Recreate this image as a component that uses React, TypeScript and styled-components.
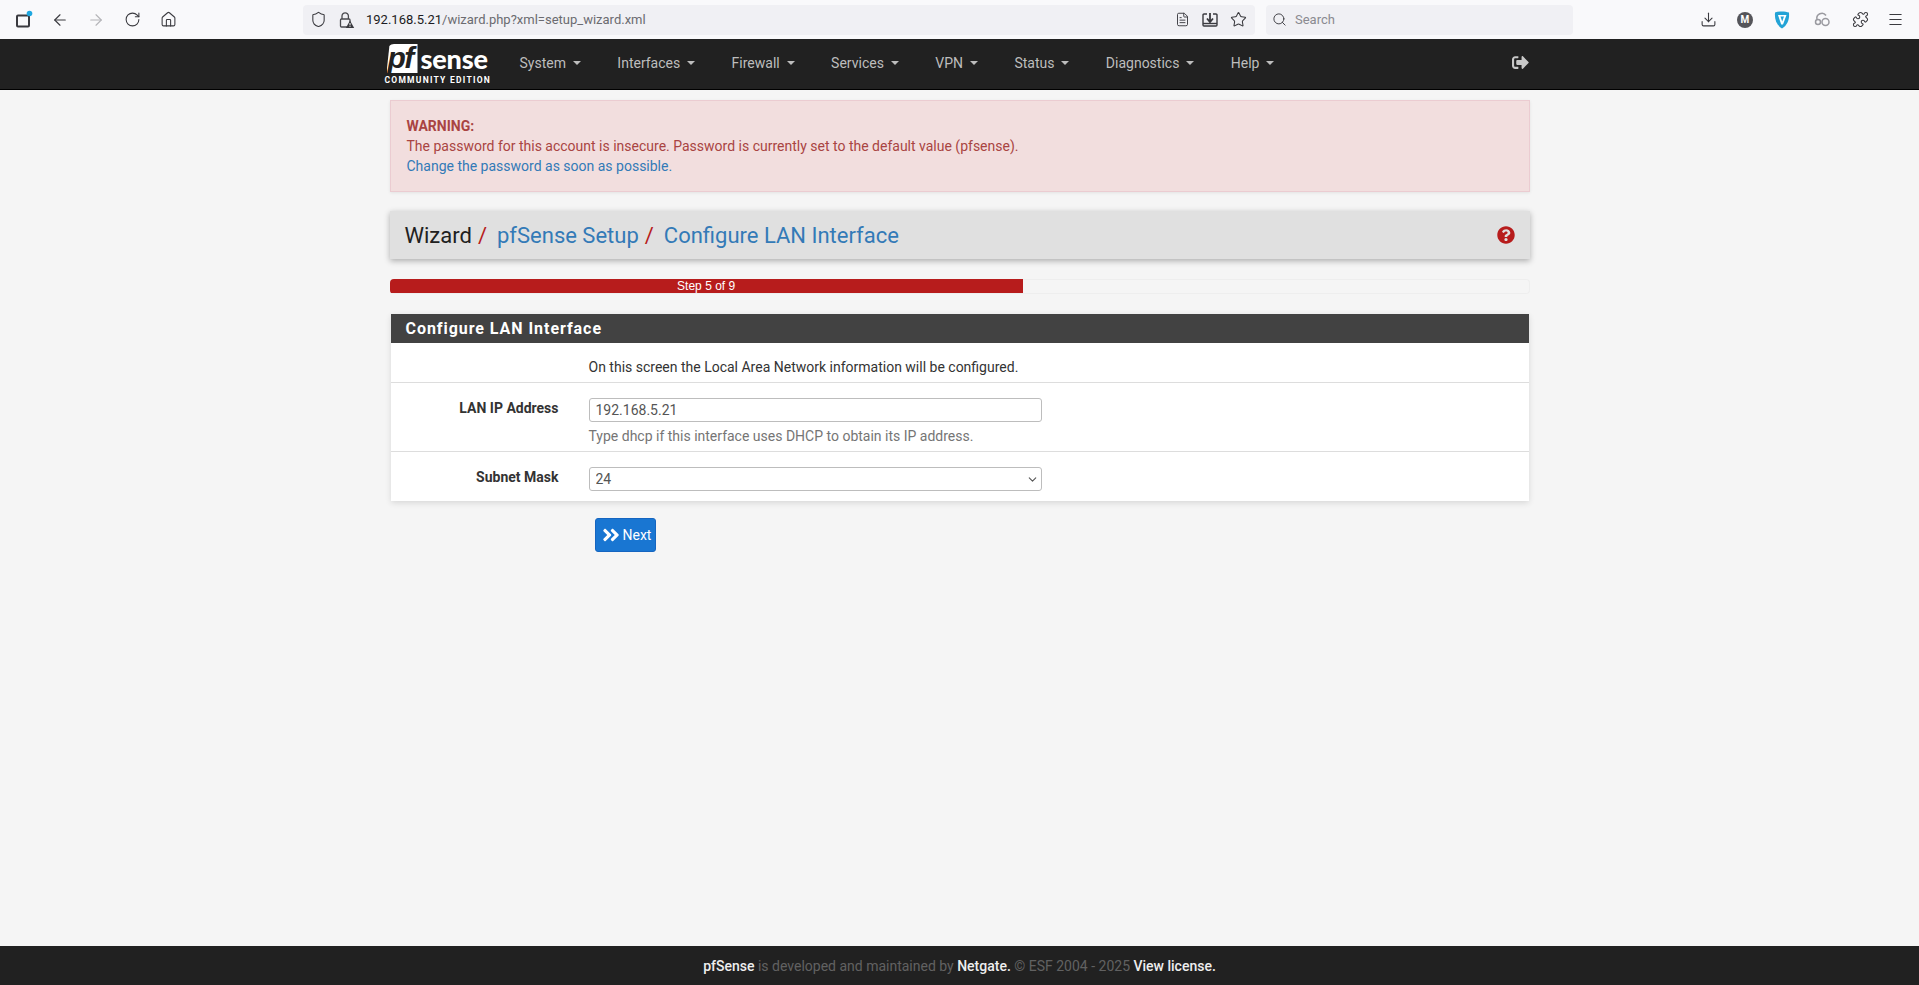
import React from "react";
import styled, { createGlobalStyle } from "styled-components";
import {
  ArrowLeft,
  ArrowRight,
  RotateCw,
  Home,
  Shield,
  FileText,
  Star,
  Search,
  Download,
  Puzzle,
  Menu,
  ChevronDown,
} from "lucide-react";
import { FaSignOutAlt, FaQuestionCircle, FaAngleDoubleRight } from "react-icons/fa";

const NAV_ITEMS = [
  "System",
  "Interfaces",
  "Firewall",
  "Services",
  "VPN",
  "Status",
  "Diagnostics",
  "Help",
];

const STEP = 5;
const TOTAL_STEPS = 9;

const App: React.FC = () => {
  return (
    <>
      <GlobalStyle />
      <Page>
        <BrowserBar>
          <ToolButton $left={12}>
            <TabsIcon />
          </ToolButton>
          <ToolButton $left={12}>
            <ArrowLeft size={18} strokeWidth={1.5} />
          </ToolButton>
          <ToolButton $left={12} $dim>
            <ArrowRight size={18} strokeWidth={1.5} />
          </ToolButton>
          <ToolButton $left={12}>
            <RotateCw size={17} strokeWidth={1.5} />
          </ToolButton>
          <ToolButton $left={12}>
            <Home size={17} strokeWidth={1.5} />
          </ToolButton>
          <UrlBar>
            <Shield size={17} strokeWidth={1.5} />
            <LockIcon />
            <UrlText>
              <b>192.168.5.21</b>/wizard.php?xml=setup_wizard.xml
            </UrlText>
            <UrlActions>
              <FileText size={15} strokeWidth={1.5} />
              <SaveIcon />
              <Star size={17} strokeWidth={1.5} />
            </UrlActions>
          </UrlBar>
          <SearchBar>
            <Search size={15} strokeWidth={1.5} />
            <span>Search</span>
          </SearchBar>
          <ExtensionTools>
            <Download size={17} strokeWidth={1.5} />
            <AccountBadge>M</AccountBadge>
            <VpnIcon />
            <LinkIcon />
            <Puzzle size={17} strokeWidth={1.5} />
            <Menu size={17} strokeWidth={1.5} />
          </ExtensionTools>
        </BrowserBar>

        <NavBar>
          <Container>
            <NavRow>
              <Logo>
                <LogoTop>
                  <LogoPf>pf</LogoPf>
                  <LogoSense>sense</LogoSense>
                </LogoTop>
                <LogoEdition>COMMUNITY EDITION</LogoEdition>
              </Logo>
              <NavList>
                {NAV_ITEMS.map((item) => (
                  <NavItem key={item}>
                    {item}
                    <Caret />
                  </NavItem>
                ))}
              </NavList>
              <SignOut>
                <FaSignOutAlt size={17} />
              </SignOut>
            </NavRow>
          </Container>
        </NavBar>

        <Main>
          <Container>
            <Alert>
              <strong>WARNING:</strong>
              <br />
              The password for this account is insecure. Password is currently set to the default
              value (pfsense).
              <br />
              <a>Change the password as soon as possible.</a>
            </Alert>

            <TitleBar>
              <Crumbs>
                <span>Wizard</span>
                <Slash>/</Slash>
                <a>pfSense Setup</a>
                <Slash>/</Slash>
                <a>Configure LAN Interface</a>
              </Crumbs>
              <HelpLink>
                <FaQuestionCircle size={18} />
              </HelpLink>
            </TitleBar>

            <Progress>
              <ProgressFill style={{ width: `${(STEP / TOTAL_STEPS) * 100}%` }}>
                Step {STEP} of {TOTAL_STEPS}
              </ProgressFill>
            </Progress>

            <Panel>
              <PanelHeading>Configure LAN Interface</PanelHeading>
              <FormRow $height={40}>
                <RowLabel />
                <RowField>
                  <Intro>On this screen the Local Area Network information will be configured.</Intro>
                </RowField>
              </FormRow>
              <FormRow $height={69}>
                <RowLabel>LAN IP Address</RowLabel>
                <RowField>
                  <TextInput defaultValue="192.168.5.21" />
                  <HelpText>Type dhcp if this interface uses DHCP to obtain its IP address.</HelpText>
                </RowField>
              </FormRow>
              <FormRow $height={49}>
                <RowLabel>Subnet Mask</RowLabel>
                <RowField>
                  <SelectWrap>
                    <SelectBox defaultValue="24">
                      <option value="24">24</option>
                    </SelectBox>
                    <SelectArrow>
                      <ChevronDown size={13} strokeWidth={2} />
                    </SelectArrow>
                  </SelectWrap>
                </RowField>
              </FormRow>
            </Panel>

            <NextButton>
              <FaAngleDoubleRight size={20} />
              Next
            </NextButton>
          </Container>
        </Main>

        <Footer>
          <b>pfSense</b> is developed and maintained by <b>Netgate.</b> © ESF 2004 - 2025{" "}
          <b>View license.</b>
        </Footer>
      </Page>
    </>
  );
};

export default App;

const TabsIcon = () => (
  <svg width="20" height="20" viewBox="0 0 20 20" fill="none">
    <rect x="3" y="5.5" width="12" height="11" rx="1" stroke="#3a3a3f" strokeWidth="2" />
    <circle cx="15.5" cy="3.5" r="2.8" fill="#1ea7e0" />
  </svg>
);

const LockIcon = () => (
  <svg width="18" height="18" viewBox="0 0 18 18" fill="none">
    <path d="M5 8V5a3.2 3.2 0 0 1 6.4 0v3" stroke="#4a4a4f" strokeWidth="1.3" />
    <rect x="3.5" y="8" width="9.5" height="8" rx="1" stroke="#4a4a4f" strokeWidth="1.3" />
    <path d="M13 9.5l4.2 7.5H8.8z" fill="#3a3a3f" />
    <path d="M13 12v2.4M13 15.2v.8" stroke="#fff" strokeWidth="1" />
  </svg>
);

const SaveIcon = () => (
  <svg width="18" height="18" viewBox="0 0 18 18" fill="none" stroke="#3a3a3f" strokeWidth="1.4">
    <path d="M6 3H3a1 1 0 0 0-1 1v10a1 1 0 0 0 1 1h12a1 1 0 0 0 1-1V4a1 1 0 0 0-1-1h-3" />
    <path d="M9 2v8M6 7.5L9 11l3-3.5" strokeWidth="1.8" />
    <path d="M2 12.5h14" />
  </svg>
);

const VpnIcon = () => (
  <svg width="18" height="20" viewBox="0 0 18 20">
    <path d="M2 2.5c4-1.5 10-1.5 14 0 .6 7-1.5 12.500-7 16-5.500-3.500-7.600-9-7-16z" fill="#23a3d6" />
    <path d="M5 5h8.500l-3.500 9.500H8.200z" fill="#fff" />
    <path d="M7.500 6.500h3.500l-1.800 5z" fill="#23a3d6" />
  </svg>
);

const LinkIcon = () => (
  <svg width="19" height="18" viewBox="0 0 19 18" fill="none" stroke="#9a9aa0" strokeWidth="1.5">
    <circle cx="12.500" cy="11" r="3.500" />
    <circle cx="5" cy="11" r="2.500" />
    <path d="M4 8.500a5 5 0 0 1 9-4" />
  </svg>
);

const GlobalStyle = createGlobalStyle`
  html, body {
    margin: 0;
    padding: 0;
    height: 100%;
    background: #f5f5f5;
  }
  body {
    font-family: Roboto, "Liberation Sans", sans-serif;
    font-size: 14px;
    line-height: 20px;
    color: #333;
  }
  #root {
    height: 100%;
  }
  * {
    box-sizing: border-box;
  }
`;

const Page = styled.div`
  display: flex;
  flex-direction: column;
  height: 985px;
  overflow: hidden;
`;

const BrowserBar = styled.div`
  display: flex;
  align-items: center;
  flex: none;
  height: 39px;
  background: #f9f9fb;
  color: #3a3a3f;
`;

const ToolButton = styled.div<{ $left: number; $dim?: boolean }>`
  display: flex;
  align-items: center;
  justify-content: center;
  width: 24px;
  height: 24px;
  margin-left: ${(p) => p.$left}px;
  color: ${(p) => (p.$dim ? "#b4b4b8" : "#3a3a3f")};
`;

const UrlBar = styled.div`
  display: flex;
  align-items: center;
  width: 952px;
  height: 30px;
  margin-left: 123px;
  padding: 0 8px 0 7px;
  gap: 10px;
  background: #f0f0f4;
  border-radius: 4px;
  font-family: Roboto, sans-serif;
`;

const UrlText = styled.span`
  margin-left: 1px;
  font-size: 13px;
  color: #6b6b70;
  b {
    font-weight: 400;
    color: #1c1b22;
  }
`;

const UrlActions = styled.div`
  display: flex;
  align-items: center;
  gap: 11px;
  margin-left: auto;
`;

const SearchBar = styled.div`
  display: flex;
  align-items: center;
  width: 307px;
  height: 30px;
  margin-left: 11px;
  padding-left: 6px;
  gap: 8px;
  background: #f0f0f4;
  border-radius: 4px;
  font-family: Roboto, sans-serif;
  font-size: 13px;
  color: #8a8a90;
  svg {
    color: #3a3a3f;
  }
`;

const ExtensionTools = styled.div`
  display: flex;
  align-items: center;
  gap: 20px;
  margin-left: 127px;
  svg:nth-child(4) {
    margin-left: 2px;
  }
  svg:last-child {
    margin-left: -2px;
  }
`;

const AccountBadge = styled.div`
  display: flex;
  align-items: center;
  justify-content: center;
  width: 16px;
  height: 16px;
  border-radius: 50%;
  background: #55555a;
  color: #fff;
  font-size: 10px;
  font-weight: 700;
`;

const Container = styled.div`
  width: 1140px;
  margin: 0 auto;
`;

const NavBar = styled.nav`
  flex: none;
  height: 51px;
  background: #212121;
  border-bottom: 1px solid #000;
`;

const NavRow = styled.div`
  display: flex;
  align-items: center;
  height: 50px;
`;

const Logo = styled.div`
  display: flex;
  flex-direction: column;
  width: 106px;
  margin-left: -5px;
  color: #fff;
`;

const LogoTop = styled.div`
  display: flex;
  align-items: center;
  height: 30px;
  padding-left: 2px;
`;

const LogoPf = styled.span`
  display: block;
  flex: none;
  width: 31px;
  height: 29px;
  background: #fff;
  border-radius: 7px 0 0 0;
  clip-path: polygon(0 100%, 10% 0, 100% 0, 100% 100%);
  color: #212121;
  font-family: "Liberation Sans", sans-serif;
  font-size: 30px;
  font-style: italic;
  font-weight: 700;
  line-height: 27px;
  letter-spacing: -1.5px;
  text-indent: 1px;
`;

const LogoSense = styled.span`
  margin-left: 3px;
  font-family: Lato, sans-serif;
  font-size: 27px;
  font-weight: 900;
  line-height: 30px;
  letter-spacing: -0.2px;
`;

const LogoEdition = styled.div`
  margin-top: 1px;
  font-family: Roboto, sans-serif;
  font-size: 8.5px;
  font-weight: 700;
  line-height: 10px;
  letter-spacing: 1.25px;
  white-space: nowrap;
`;

const NavList = styled.div`
  display: flex;
  align-items: center;
  gap: 36.4px;
  margin-bottom: 2px;
  margin-left: 29px;
`;

const NavItem = styled.div`
  display: flex;
  align-items: center;
  color: #bdbdbd;
  font-size: 14px;
  white-space: nowrap;
`;

const Caret = styled.span`
  width: 0;
  height: 0;
  margin-left: 7px;
  border-top: 4px solid #bdbdbd;
  border-left: 4px solid transparent;
  border-right: 4px solid transparent;
`;

const SignOut = styled.div`
  display: flex;
  margin: 0 0 4px auto;
  padding-right: 1px;
  color: #c8c8c8;
`;

const Main = styled.main`
  flex: 1;
  padding-top: 10px;
`;

const Alert = styled.div`
  height: 92px;
  padding: 15px 15px 15px 16px;
  background: #f2dede;
  border: 1px solid #ebccd1;
  box-shadow: 0 1px 3px rgba(0, 0, 0, 0.08);
  color: #a94442;
  font-size: 14px;
  line-height: 20px;
  a {
    color: #337ab7;
  }
`;

const TitleBar = styled.div`
  display: flex;
  align-items: center;
  justify-content: space-between;
  height: 48px;
  margin-top: 19px;
  padding: 0 15px 0 15px;
  background: #e0e0e0;
  box-shadow: 0 2px 6px rgba(0, 0, 0, 0.3);
`;

const Crumbs = styled.h1`
  display: flex;
  margin: 0;
  padding-top: 2px;
  font-size: 22px;
  font-weight: 400;
  line-height: 28px;
  color: #212121;
  a {
    color: #337ab7;
  }
`;

const Slash = styled.span`
  margin: 0 10px 0 6px;
  color: #b71c1c;
`;

const HelpLink = styled.div`
  display: flex;
  color: #b71c1c;
`;

const Progress = styled.div`
  height: 15px;
  margin-top: 20px;
  background: #f5f5f5;
  box-shadow: inset 0 0 0 1px #eee;
  border-radius: 4px;
  overflow: hidden;
`;

const ProgressFill = styled.div`
  height: 14px;
  background: #b71c1c;
  color: #fff;
  font-family: "Liberation Sans", sans-serif;
  font-size: 12px;
  line-height: 15px;
  text-align: center;
`;

const Panel = styled.section`
  margin: 20px 1px 0;
  background: #fff;
  box-shadow: 0 2px 6px rgba(0, 0, 0, 0.12);
`;

const PanelHeading = styled.h2`
  height: 29px;
  margin: 0;
  padding-left: 15px;
  background: #424242;
  color: #fff;
  font-size: 16px;
  font-weight: 700;
  line-height: 29px;
  letter-spacing: 0.95px;
`;

const FormRow = styled.div<{ $height: number }>`
  display: flex;
  height: ${(p) => p.$height}px;
  border-bottom: 1px solid #ddd;
  &:last-child {
    border-bottom: 0;
  }
`;

const RowLabel = styled.label`
  flex: none;
  width: 168px;
  padding-top: 15px;
  text-align: right;
  font-weight: 700;
  color: #333;
`;

const RowField = styled.div`
  flex: 1;
  padding: 15px 0 0 30px;
`;

const Intro = styled.div`
  margin-top: -1px;
`;

const TextInput = styled.input`
  display: block;
  width: 453px;
  height: 24px;
  padding: 0 6px;
  background: #fff;
  border: 1px solid #bdbdbd;
  border-radius: 3px;
  font-family: Roboto, sans-serif;
  font-size: 14px;
  color: #555;
  outline: none;
`;

const HelpText = styled.div`
  margin-top: 4px;
  color: #757575;
`;

const SelectWrap = styled.div`
  position: relative;
  width: 453px;
  height: 24px;
`;

const SelectBox = styled.select`
  appearance: none;
  display: block;
  width: 100%;
  height: 24px;
  padding: 0 6px;
  background: #fff;
  border: 1px solid #bdbdbd;
  border-radius: 3px;
  font-family: Roboto, sans-serif;
  font-size: 14px;
  color: #555;
  outline: none;
`;

const SelectArrow = styled.span`
  position: absolute;
  top: 6px;
  right: 3px;
  display: flex;
  color: #555;
`;

const NextButton = styled.button`
  display: flex;
  align-items: center;
  gap: 2px;
  width: 61px;
  height: 34px;
  margin: 17px 0 0 205px;
  padding: 0 0 0 5px;
  background: #1976d2;
  border: 1px solid #1565c0;
  border-radius: 3px;
  color: #fff;
  font-family: Roboto, sans-serif;
  font-size: 14px;
  font-weight: 400;
`;

const Footer = styled.footer`
  flex: none;
  height: 39px;
  padding-top: 2px;
  background: #212121;
  color: #616161;
  font-size: 14px;
  line-height: 37px;
  text-align: center;
  b {
    color: #eee;
    font-weight: 500;
  }
`;
